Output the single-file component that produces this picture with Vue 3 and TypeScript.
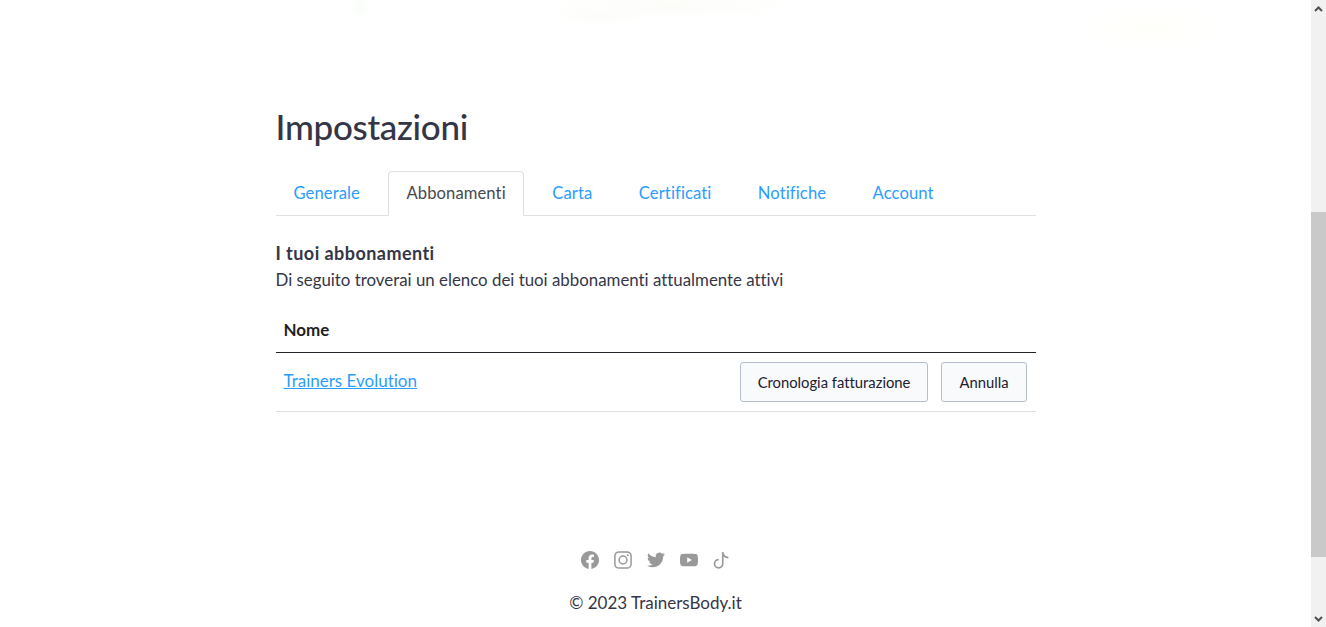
<template>
  <div class="page">
    <div class="content">
      <!-- hero sfumato, quasi invisibile nello screenshot -->
      <div class="hero" aria-hidden="true"></div>

      <main class="settings">
        <h1 class="settings__title">Impostazioni</h1>

        <nav class="tabs">
          <a
            v-for="tab in tabs"
            :key="tab"
            href="#"
            class="tabs__item"
            :class="{ 'tabs__item--active': tab === activeTab }"
          >{{ tab }}</a>
        </nav>

        <section class="subs">
          <h2 class="subs__title">I tuoi abbonamenti</h2>
          <p class="subs__desc">Di seguito troverai un elenco dei tuoi abbonamenti attualmente attivi</p>

          <div class="subs__head">Nome</div>
          <div class="subs__row">
            <a href="#" class="subs__link">Trainers Evolution</a>
            <div class="subs__actions">
              <button type="button" class="btn">Cronologia fatturazione</button>
              <button type="button" class="btn">Annulla</button>
            </div>
          </div>
        </section>
      </main>

      <footer class="footer">
        <div class="footer__social">
          <svg viewBox="0 0 24 24" class="icon"><path d="M24 12.073c0-6.627-5.373-12-12-12s-12 5.373-12 12c0 5.99 4.388 10.954 10.125 11.854v-8.385H7.078v-3.47h3.047V9.43c0-3.007 1.792-4.669 4.533-4.669 1.312 0 2.686.235 2.686.235v2.953H15.83c-1.491 0-1.956.925-1.956 1.874v2.25h3.328l-.532 3.47h-2.796v8.385C19.612 23.027 24 18.062 24 12.073z" /></svg>
          <svg viewBox="0 0 24 24" class="icon icon--line">
            <rect x="1.2" y="1.2" width="21.6" height="21.6" rx="5.6" />
            <circle cx="12" cy="12" r="5.2" />
            <circle cx="18.4" cy="5.6" r="1.4" class="icon__dot" />
          </svg>
          <svg viewBox="0 0 24 24" class="icon"><path d="M23.953 4.57a10 10 0 01-2.825.775 4.958 4.958 0 002.163-2.723c-.951.555-2.005.959-3.127 1.184a4.92 4.92 0 00-8.384 4.482C7.69 8.095 4.067 6.13 1.64 3.162a4.822 4.822 0 00-.666 2.475c0 1.71.87 3.213 2.188 4.096a4.904 4.904 0 01-2.228-.616v.06a4.923 4.923 0 003.946 4.827 4.996 4.996 0 01-2.212.085 4.936 4.936 0 004.604 3.417 9.867 9.867 0 01-6.102 2.105c-.39 0-.779-.023-1.17-.067a13.995 13.995 0 007.557 2.209c9.053 0 13.998-7.496 13.998-13.985 0-.21 0-.42-.015-.63A9.935 9.935 0 0024 4.59z" /></svg>
          <svg viewBox="0 0 24 24" class="icon"><path d="M23.498 6.186a3.016 3.016 0 0 0-2.122-2.136C19.505 3.545 12 3.545 12 3.545s-7.505 0-9.377.505A3.017 3.017 0 0 0 .502 6.186C0 8.07 0 12 0 12s0 3.93.502 5.814a3.016 3.016 0 0 0 2.122 2.136c1.871.505 9.376.505 9.376.505s7.505 0 9.377-.505a3.015 3.015 0 0 0 2.122-2.136C24 15.93 24 12 24 12s0-3.93-.502-5.814zM9.545 15.568V8.432L15.818 12l-6.273 3.568z" /></svg>
          <svg viewBox="0 0 24 24" class="icon icon--line icon--thin"><path d="M13 1.5v15.5a5.5 5.5 0 1 1-5.5-5.5M13 1.5c.4 4 3.2 7 7.5 7.3" /></svg>
        </div>
        <p class="footer__copy">© 2023 TrainersBody.it</p>
      </footer>
    </div>

    <!-- scrollbar della finestra -->
    <aside class="scrollbar" aria-hidden="true">
      <span class="scrollbar__arrow">
        <svg viewBox="0 0 9 6"><path d="M1 5l3.5-3.5L8 5" /></svg>
      </span>
      <span class="scrollbar__space"></span>
      <span class="scrollbar__thumb"></span>
      <span class="scrollbar__space scrollbar__space--end"></span>
      <span class="scrollbar__arrow">
        <svg viewBox="0 0 9 6"><path d="M1 1l3.5 3.5L8 1" /></svg>
      </span>
    </aside>
  </div>
</template>

<script setup lang="ts">
const tabs: string[] = ['Generale', 'Abbonamenti', 'Carta', 'Certificati', 'Notifiche', 'Account'];
const activeTab = 'Abbonamenti';
</script>

<style>
html,
body {
  margin: 0;
  overflow: hidden;
  background: #fff;
}
</style>

<style scoped>
.page {
  display: flex;
  height: 627px;
  overflow: hidden;
  font-family: Lato, "Liberation Sans", sans-serif;
  font-variant-ligatures: none;
  color: #343647;
}

.content {
  flex: 1;
  min-width: 0;
  display: flex;
  flex-direction: column;
  align-items: center;
}

.hero {
  align-self: stretch;
  height: 50px;
  flex-shrink: 0;
  background:
    radial-gradient(ellipse 70px 24px at 1150px 28px, #fffffa, transparent),
    radial-gradient(ellipse 130px 14px at 670px 6px, #fcfcf9, transparent),
    radial-gradient(ellipse 50px 10px at 600px 16px, #fcfdf9, transparent),
    radial-gradient(ellipse 14px 20px at 360px 6px, #fafdfa, transparent);
}

.settings {
  width: 760px;
}

.settings__title {
  margin: 54px 0 0;
  font-size: 35px;
  line-height: 45px;
  font-weight: 500;
  letter-spacing: -0.3px;
}

.tabs {
  display: flex;
  margin-top: 22px;
  border-bottom: 1px solid #dedfe3;
}

.tabs__item {
  padding: 11px 17px;
  margin-right: 10.5px;
  margin-bottom: -1px;
  font-size: 16.6px;
  letter-spacing: 0.1px;
  line-height: 21px;
  color: #2b9dff;
  text-decoration: none;
  border: 1px solid transparent;
  border-radius: 4px 4px 0 0;
}

.tabs__item--active {
  color: #48484f;
  border-color: #dedfe3;
  border-bottom-color: #fff;
}

.subs__title {
  margin: 26px 0 0;
  font-size: 18px;
  line-height: 22px;
  font-weight: 700;
  letter-spacing: 0.45px;
}

.subs__desc {
  margin: 6px 0 0;
  font-size: 16.85px;
  line-height: 20px;
}

.subs__head {
  margin-top: 30px;
  padding: 0 8px 12px;
  font-size: 17px;
  line-height: 20px;
  font-weight: 700;
  color: #1f1f24;
  border-bottom: 1px solid #24242a;
}

.subs__row {
  display: flex;
  align-items: center;
  justify-content: space-between;
  padding: 9px 9px 9px 8px;
  border-bottom: 1px solid #dedfe3;
}

.subs__link {
  margin-bottom: 3px;
  font-size: 17px;
  color: #2b9dff;
}

.subs__actions {
  display: flex;
  gap: 13px;
}

.btn {
  height: 40px;
  padding: 0 17px;
  font: inherit;
  font-size: 14.8px;
  color: #1c2030;
  background: #f9fafb;
  border: 1px solid #b4bfcc;
  border-radius: 3px;
}

.footer {
  margin-top: 139px;
  text-align: center;
}

.footer__social {
  display: flex;
  justify-content: center;
  gap: 15px;
  height: 18px;
}

.icon {
  width: 18px;
  height: 18px;
  fill: #999;
}

.icon--line {
  fill: none;
  stroke: #999;
  stroke-width: 2;
}

.icon--thin {
  stroke-width: 2.2;
}

.icon__dot {
  fill: #999;
  stroke: none;
}

.footer__copy {
  margin: 24px 0 0;
  font-size: 17px;
  line-height: 20px;
}

.scrollbar {
  width: 15px;
  flex-shrink: 0;
  display: flex;
  flex-direction: column;
  background: #f1f1f1;
}

.scrollbar__arrow {
  height: 17px;
  display: flex;
  align-items: center;
  justify-content: center;
}

.scrollbar__arrow svg {
  width: 9px;
  height: 6px;
  fill: none;
  stroke: #505050;
  stroke-width: 2;
}

.scrollbar__space {
  height: 195px;
}

.scrollbar__thumb {
  height: 345px;
  background: #c9c9c9;
}

.scrollbar__space--end {
  height: 53px;
}
</style>
